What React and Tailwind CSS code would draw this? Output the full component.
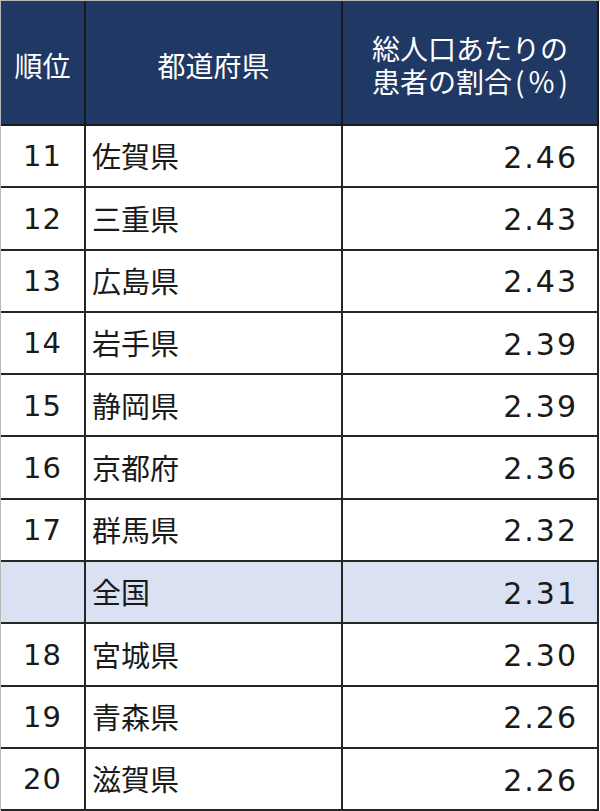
import React from "react";

const rows = [
  ["11", "佐賀県", "2.46"],
  ["12", "三重県", "2.43"],
  ["13", "広島県", "2.43"],
  ["14", "岩手県", "2.39"],
  ["15", "静岡県", "2.39"],
  ["16", "京都府", "2.36"],
  ["17", "群馬県", "2.32"],
  ["", "全国", "2.31", true],
  ["18", "宮城県", "2.30"],
  ["19", "青森県", "2.26"],
  ["20", "滋賀県", "2.26"],
];

const jp = { fontFamily: '"Noto Sans CJK JP", "Noto Sans", sans-serif' };
const num = { fontFamily: '"DejaVu Sans", "Noto Sans CJK JP", sans-serif' };

export default function App() {
  return (
    <div className="w-[600px] h-[811px] bg-white">
      <div className="w-[600px] border-l border-t border-[#b8b8b8] pr-px">
        <div
          className="grid grid-cols-[85px_257px_256px] h-[125px] bg-[#1f3864] text-white"
          style={jp}
        >
          <div className="flex items-center justify-center border-r-2 border-b-2 border-[#1a1a1a] text-[28px] pt-[4px]">
            順位
          </div>
          <div className="flex items-center justify-center border-r-2 border-b-2 border-[#1a1a1a] text-[28px] pt-[4px]">
            都道府県
          </div>
          <div className="flex flex-col items-center justify-center border-r-2 border-b-2 border-[#1a1a1a] text-[28px] pt-[4px]">
            <div className="h-[33px] leading-[33px]">総人口あたりの</div>
            <div className="h-[33px] leading-[33px] flex">
              <span>患者の割合</span>
              <span className="ml-[3px]">(</span>
              <span className="mx-[3px]">％</span>
              <span>)</span>
            </div>
          </div>
        </div>
        {rows.map(([rank, name, val, hl], i) => (
          <div
            key={i}
            className={
              "grid grid-cols-[85px_257px_256px] h-[62.3px] text-[#1a1a1a] " +
              (hl ? "bg-[#d9e1f2]" : "bg-white")
            }
          >
            <div
              className="flex items-center justify-center border-r-2 border-b-2 border-[#262626] text-[29px] tracking-[1px] pt-[2px]"
              style={num}
            >
              {rank}
            </div>
            <div
              className="flex items-center pl-[6px] border-r-2 border-b-2 border-[#262626] text-[29px]"
              style={jp}
            >
              {name}
            </div>
            <div
              className="flex items-center justify-end pr-[19px] border-r-2 border-b-2 border-[#262626] text-[30px] tracking-[2px] pt-[2px]"
              style={num}
            >
              {val}
            </div>
          </div>
        ))}
      </div>
    </div>
  );
}
